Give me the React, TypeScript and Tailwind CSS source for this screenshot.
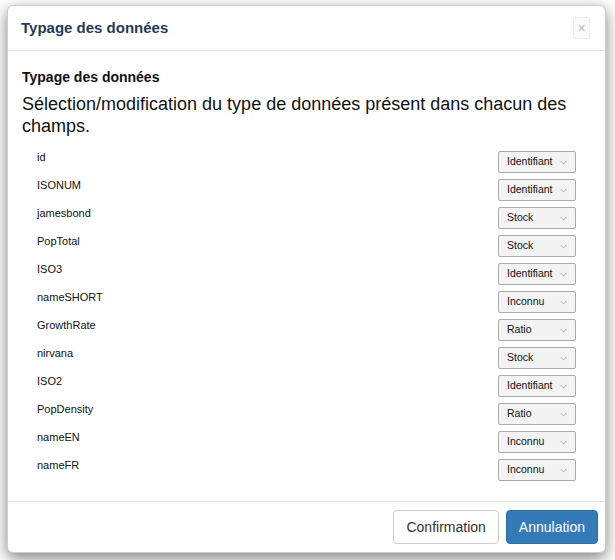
import { ChevronDown } from 'lucide-react';

const fields = [
  { name: 'id', type: 'Identifiant' },
  { name: 'ISONUM', type: 'Identifiant' },
  { name: 'jamesbond', type: 'Stock' },
  { name: 'PopTotal', type: 'Stock' },
  { name: 'ISO3', type: 'Identifiant' },
  { name: 'nameSHORT', type: 'Inconnu' },
  { name: 'GrowthRate', type: 'Ratio' },
  { name: 'nirvana', type: 'Stock' },
  { name: 'ISO2', type: 'Identifiant' },
  { name: 'PopDensity', type: 'Ratio' },
  { name: 'nameEN', type: 'Inconnu' },
  { name: 'nameFR', type: 'Inconnu' },
];

function TypeSelect({ value }: { value: string }) {
  return (
    <div className="flex h-[22px] w-[78px] items-center justify-between rounded-[2px] border border-[#a9a9a9] bg-[#f3f3f3] pl-[8px] pr-[6px] text-[10.5px] text-[#111]">
      <span>{value}</span>
      <ChevronDown size={11} strokeWidth={1.5} className="text-[#888]" />
    </div>
  );
}

export default function App() {
  return (
    <div
      className="h-[560px] w-[615px] bg-white pl-[7px] pt-[5px]"
      style={{ fontFamily: '"Liberation Sans", Arial, sans-serif' }}
    >
      <div className="flex w-[599px] flex-col rounded-[6px] border border-black/20 bg-white shadow-[0_5px_15px_rgba(0,0,0,0.5)]">
        <div className="flex h-[45px] items-center justify-between border-b border-[#e5e5e5] pl-[13px] pr-[15px]">
          <h4 className="text-[15px] font-bold text-[#1f3b57]">Typage des données</h4>
          <button className="flex h-[22px] w-[17px] items-center justify-center rounded-[2px] border border-[#ececec] bg-[#fafafa] text-[14px] leading-none text-[#bbb]">
            ×
          </button>
        </div>

        <div className="flex flex-col pb-[20px] pl-[14px] pr-[14px] pt-[17px]">
          <h5 className="text-[14px] font-bold leading-[18px] text-[#111]">Typage des données</h5>
          <p className="mt-[7px] text-[18px] leading-[22px] text-[#111]">
            Sélection/modification du type de données présent dans chacun des champs.
          </p>
          <div className="mt-[14px] flex flex-col gap-[6px] px-[15px]">
            {fields.map((f) => (
              <div key={f.name} className="flex items-start justify-between">
                <span className="text-[11px] leading-[12px] text-[#111]">{f.name}</span>
                <TypeSelect value={f.type} />
              </div>
            ))}
          </div>
        </div>

        <div className="flex justify-end gap-[7px] border-t border-[#e5e5e5] pb-[8px] pr-[7px] pt-[8px]">
          <button className="h-[34px] rounded-[4px] border border-[#ccc] bg-white px-[12px] text-[14px] text-[#333]">
            Confirmation
          </button>
          <button className="h-[34px] rounded-[4px] border border-[#2e6da4] bg-[#337ab7] px-[12px] text-[14px] text-white">
            Annulation
          </button>
        </div>
      </div>
    </div>
  );
}
